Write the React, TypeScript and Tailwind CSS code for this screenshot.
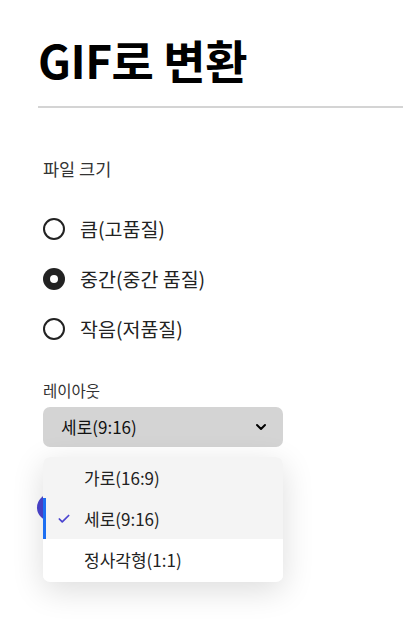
import { Check, ChevronDown } from 'lucide-react';

const SIZES = [
    { label: '큼(고품질)', value: 'large' },
    { label: '중간(중간 품질)', value: 'medium' },
    { label: '작음(저품질)', value: 'small' },
];

const LAYOUTS = [
    { label: '가로(16:9)', value: 'landscape' },
    { label: '세로(9:16)', value: 'portrait' },
    { label: '정사각형(1:1)', value: 'square' },
];

const FONT = { fontFamily: '"Noto Sans CJK KR", "Noto Sans", sans-serif' };

function Radio({ checked }: { checked: boolean }) {
    if (checked) {
        return (
            <span className="w-[22px] h-[22px] rounded-full bg-[#222] flex items-center justify-center shrink-0">
                <span className="w-[8px] h-[8px] rounded-full bg-white" />
            </span>
        );
    }
    return <span className="w-[22px] h-[22px] rounded-full border-2 border-[#222] bg-white shrink-0" />;
}

export default function App() {
    const size = 'medium';
    const layout = 'portrait';

    return (
        <div className="min-h-screen bg-white text-[#222] pt-[29px] pl-[38px]" style={FONT}>
            {/* ===== TITLE ===== */}
            <h1 className="text-[46px] font-bold leading-[60px] text-black tracking-[-0.5px]">GIF로 변환</h1>
            <div className="h-[2px] bg-[#d4d4d4] mt-[17px]" />

            <div className="pl-[5px]">
                {/* File size */}
                <div className="mt-[50px] text-[17.5px] leading-[22px] text-[#333]">파일 크기</div>

                <div className="mt-[24px] flex flex-col">
                    {SIZES.map(({ label, value }) => (
                        <label key={value} className="h-[50px] flex items-center gap-[15px]">
                            <Radio checked={size === value} />
                            <span className="text-[19.5px] leading-none text-[#222]">{label}</span>
                        </label>
                    ))}
                </div>

                {/* Layout */}
                <div className="mt-[26px] text-[15.5px] leading-[20px] text-[#333]">레이아웃</div>

                <div className="relative mt-[7px] w-[240px]">
                    <button className="w-full h-[40px] rounded-[7px] bg-[#d4d4d4] flex items-center justify-between pl-[18px] pr-[14px]">
                        <span className="text-[17px] text-[#111]">세로(9:16)</span>
                        <ChevronDown className="w-[16px] h-[16px] text-black" strokeWidth={3} />
                    </button>

                    {/* button behind the open menu */}
                    <div className="mt-[47px] -ml-[6px] w-[200px] h-[27px] rounded-full bg-[#4b44d0]" />

                    {/* ===== MENU ===== */}
                    <div className="absolute left-0 top-[50px] w-[240px] bg-white rounded-[7px] overflow-hidden pb-[2px] shadow-[0_8px_32px_rgba(0,0,0,0.14)]">
                        {LAYOUTS.map(({ label, value }, i) => {
                            const isActive = layout === value;
                            return (
                                <div
                                    key={value}
                                    className={
                                        'relative h-[41px] flex items-center pl-[41px] ' +
                                        (i < 2 ? 'bg-[#f4f4f4]' : 'bg-white')
                                    }
                                >
                                    {isActive && (
                                        <>
                                            <span className="absolute left-0 top-0 bottom-0 w-[3px] bg-[#1d6ff2]" />
                                            <Check className="absolute left-[14px] w-[14px] h-[14px] text-[#4b44d0]" strokeWidth={3} />
                                        </>
                                    )}
                                    <span className="text-[17px] text-[#222]">{label}</span>
                                </div>
                            );
                        })}
                    </div>
                </div>
            </div>
        </div>
    );
}
